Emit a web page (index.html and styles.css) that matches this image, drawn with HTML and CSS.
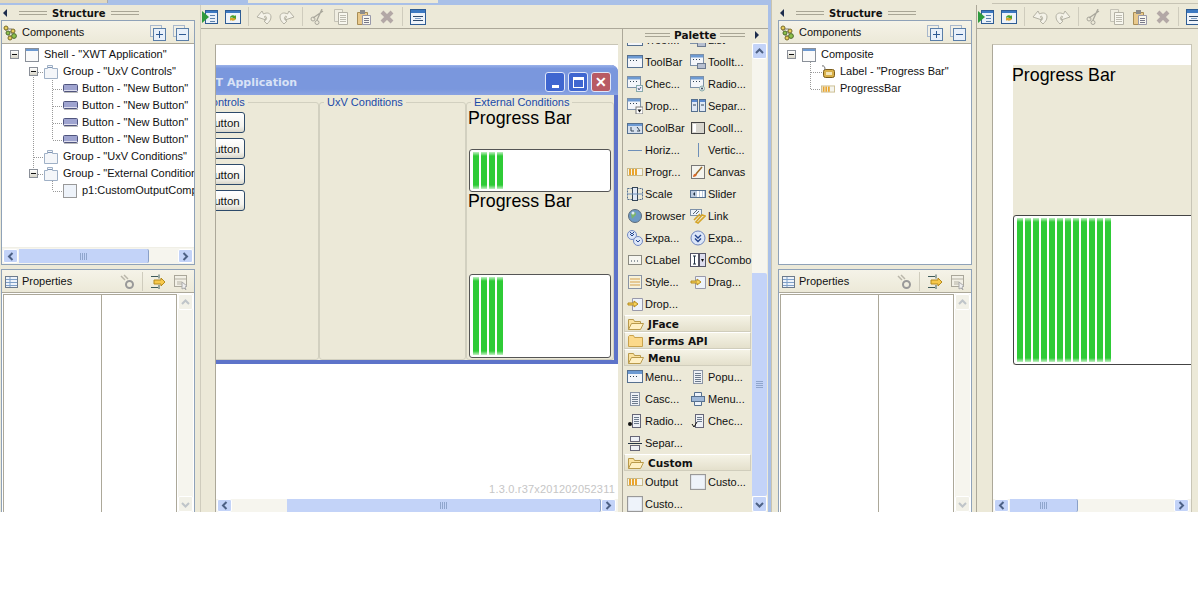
FILE: index.html
```html
<!DOCTYPE html>
<html lang="en">
<head>
<meta charset="utf-8">
<title>WindowBuilder</title>
<link rel="stylesheet" href="styles.css">
</head>
<body>
<svg class="defs" width="0" height="0" aria-hidden="true">
<defs>
<symbol id="comps" viewBox="0 0 16 16"><path d="M3 2v4M3 4h6M7 6l3 4M5 11h3" stroke="#777" fill="none"/><circle cx="3" cy="3" r="2" fill="#e8cf5a" stroke="#776a2a"/><circle cx="5" cy="8" r="2" fill="#8cc04a" stroke="#4c6a2a"/><circle cx="10" cy="6" r="2" fill="#e8cf5a" stroke="#776a2a"/><circle cx="11" cy="11" r="2.4" fill="#8cc04a" stroke="#4c6a2a"/><circle cx="7" cy="13" r="2" fill="#e8cf5a" stroke="#776a2a"/></symbol>
<symbol id="plus" viewBox="0 0 16 16"><rect x=".5" y=".5" width="11" height="11" fill="#f2f0e6" stroke="#a8b8cc"/><rect x="3.5" y="3.5" width="12" height="12" fill="#e8f0fa" stroke="#5a7ea8"/><path d="M6 9.500h7M9.500 6v7" stroke="#2e5a94"/></symbol>
<symbol id="minus" viewBox="0 0 16 16"><rect x=".5" y=".5" width="11" height="11" fill="#f2f0e6" stroke="#a8b8cc"/><rect x="3.500" y="3.500" width="12" height="12" fill="#e8f0fa" stroke="#5a7ea8"/><path d="M6 9.500h7" stroke="#2e5a94"/></symbol>
<symbol id="shell" viewBox="0 0 14 14"><rect x=".5" y=".5" width="13" height="13" fill="#fafafa" stroke="#8a9099"/><rect x="1" y="1" width="12" height="2" fill="#6d9ad2"/></symbol>
<symbol id="group" viewBox="0 0 14 14"><path d="M.5 3.500h3v-3h5v3h5v10H.500z" fill="#f4f6f9" stroke="#9fb0c6"/><path d="M4 2.500h4" stroke="#7c93b3"/></symbol>
<symbol id="btn" viewBox="0 0 15 9"><rect x=".5" y=".5" width="14" height="7" rx="1" fill="#9fa4d0" stroke="#50557e"/><path d="M1 6.500h13" stroke="#e0e0ef"/><path d="M1 8.500h14" stroke="#bbb"/></symbol>
<symbol id="custom" viewBox="0 0 14 14"><rect x=".5" y=".5" width="13" height="13" fill="#eef3fa" stroke="#999"/></symbol>
<symbol id="tag" viewBox="0 0 14 14"><rect x="2.500" y="4.500" width="11" height="8" rx="2" fill="#d8b04a" stroke="#7a5c1a"/><rect x="5" y="7" width="6" height="3" fill="#f4e6b8"/><path d="M1 1c3-1 3 3 3 4" fill="none" stroke="#666"/></symbol>
<symbol id="prog" viewBox="0 0 16 8"><rect x=".5" y=".5" width="15" height="7" fill="#f4f4ee" stroke="#c8b98a"/><path d="M2 1h2v6H2zM5 1h2v6H5zM8 1h2v6H8z" fill="#e9a52e"/></symbol>
<symbol id="table" viewBox="0 0 14 14"><rect x=".5" y="1.500" width="12" height="11" fill="#eef3fa" stroke="#6c7a8c"/><path d="M1 4.500h11M1 7.500h11M1 10.500h11M5 2v10" stroke="#7fa0c8"/></symbol>
<symbol id="restore" viewBox="0 0 16 16"><path d="M2 2l4 4M5 1l4 4" stroke="#b9b6aa" stroke-width="1.500"/><circle cx="10.500" cy="10.500" r="3.500" fill="none" stroke="#999" stroke-width="2"/></symbol>
<symbol id="flow" viewBox="0 0 16 16"><path d="M1 2.500h7M1 13.500h7M9 .5v4M9 11v4" stroke="#3d5a5a"/><path d="M4 6h7V4l4 4-4 4v-2H4z" fill="#f7c94c" stroke="#b58a1c"/></symbol>
<symbol id="cursor" viewBox="0 0 16 16"><rect x="1.500" y="1.500" width="12" height="11" fill="#f2f0e6" stroke="#aaa79a"/><path d="M2 5h11M4 8h5M4 10h5" stroke="#b5b2a5"/><path d="M9 8l5 4-2 1 1 3-2-2-2 1z" fill="#eee" stroke="#aaa"/></symbol>
<symbol id="run" viewBox="0 0 16 16"><rect x="3.500" y="1.500" width="12" height="13" fill="#e9f0f9" stroke="#2e5c94"/><rect x="4" y="2" width="11" height="2" fill="#3c79c2"/><path d="M8 6.500h5M8 9.500h5M8 12.500h5" stroke="#5c82ad"/><path d="M0 2l7 6-7 6z" fill="#2d9a3c"/></symbol>
<symbol id="refresh" viewBox="0 0 16 16"><rect x=".5" y="1.500" width="15" height="13" fill="#eef3fa" stroke="#2e5c94"/><rect x="1" y="2" width="14" height="2" fill="#3c79c2"/><path d="M5 8c1-2 4-2 5-1l1-1v4H7l1-1c-1-.6-2-.4-3 0z" fill="#4ba02c"/><path d="M11 10c-1 2-4 2-5 1l-1 1V9h4z" fill="#d6a32c"/></symbol>
<symbol id="undo" viewBox="0 0 16 16"><path d="M1 8l5-6 1.500 3C11 3 15 4 15 8c0 3-2 5-4 7l-3-3c2-1 3-2 2.500-3.500C10 7 9 7 8.500 7.500L10 11z" fill="#f4f2e8" stroke="#b4b2a4"/></symbol>
<symbol id="redo" viewBox="0 0 16 16"><path d="M15 8l-5-6-1.500 3C5 3 1 4 1 8c0 3 2 5 4 7l3-3c-2-1-3-2-2.500-3.500C6 7 7 7 7.500 7.500L6 11z" fill="#f4f2e8" stroke="#b4b2a4"/></symbol>
<symbol id="cut" viewBox="0 0 16 16"><path d="M12 0L7 11M13 2L3 9" stroke="#a9a79c" stroke-width="1.300"/><circle cx="3" cy="10" r="2" fill="none" stroke="#a9a79c"/><circle cx="7" cy="13.500" r="2" fill="none" stroke="#a9a79c"/></symbol>
<symbol id="copy" viewBox="0 0 16 16"><path d="M1.500.5h8v12h-8z" fill="#f0eee2" stroke="#c4c2b6"/><path d="M5.500 3.500h9v12h-9z" fill="#f8f7ef" stroke="#b4b2a6"/><path d="M7 6.500h6M7 8.500h6M7 10.500h6M7 12.500h6" stroke="#bdbbb0"/></symbol>
<symbol id="paste" viewBox="0 0 16 16"><path d="M1.500 3.500h10v12h-10z" fill="#e9c98c" stroke="#a88d56"/><rect x="4" y="1" width="5" height="4" fill="#8c8c8c"/><path d="M6.500 6.500h8v9h-8z" fill="#f8f7ef" stroke="#99a"/><path d="M8 9.500h5M8 11.500h5M8 13.500h5" stroke="#778"/></symbol>
<symbol id="del" viewBox="0 0 16 16"><path d="M3 3l10 10M13 3L3 13" stroke="#b3a8a6" stroke-width="4"/></symbol>
<symbol id="layout" viewBox="0 0 16 16"><rect x=".5" y=".5" width="15" height="15" fill="#eef3fa" stroke="#2e5c94"/><rect x="1" y="1" width="14" height="3" fill="#3c79c2"/><path d="M3 7.500h10M3 11.500h10" stroke="#2e4a6c"/><path d="M5 9.500h6" stroke="#7fa0c8"/></symbol>
<symbol id="p-tb" viewBox="0 0 16 16"><rect x=".5" y="1.500" width="15" height="12" fill="#f4f6fa" stroke="#56708f"/><rect x="1" y="2" width="14" height="2.500" fill="#6d9ad2"/><path d="M3 6.500h1M6 6.500h1M9 6.500h1" stroke="#345"/></symbol>
<symbol id="p-ti" viewBox="0 0 16 16"><rect x=".5" y=".5" width="13" height="11" fill="#f4f6fa" stroke="#7c90a8"/><rect x="1" y="1" width="12" height="2.500" fill="#6d9ad2"/><path d="M3 5.500h1M6 5.500h1M9 5.500h1" stroke="#345"/><rect x="7.500" y="9.500" width="8" height="5" fill="#b6bfd0" stroke="#6c7a90"/></symbol>
<symbol id="p-ck" viewBox="0 0 16 16"><rect x=".5" y=".5" width="13" height="11" fill="#f4f6fa" stroke="#7c90a8"/><rect x="1" y="1" width="12" height="2.500" fill="#6d9ad2"/><path d="M3 5.500h1M6 5.500h1M9 5.500h1" stroke="#345"/><rect x="9.500" y="9.500" width="6" height="6" fill="#eef" stroke="#8aa"/><path d="M11 12l1 2 2-3" stroke="#567" fill="none"/></symbol>
<symbol id="p-rd" viewBox="0 0 16 16"><rect x=".5" y=".5" width="13" height="11" fill="#f4f6fa" stroke="#7c90a8"/><rect x="1" y="1" width="12" height="2.500" fill="#6d9ad2"/><path d="M3 5.500h1M6 5.500h1M9 5.500h1" stroke="#345"/><circle cx="12" cy="12.500" r="2.500" fill="#e8ecef" stroke="#8aa"/><circle cx="12" cy="12.500" r="1" fill="#345"/></symbol>
<symbol id="p-dr" viewBox="0 0 16 16"><rect x=".5" y=".5" width="13" height="11" fill="#f4f6fa" stroke="#7c90a8"/><rect x="1" y="1" width="12" height="2.500" fill="#6d9ad2"/><path d="M3 5.500h1M6 5.500h1M9 5.500h1" stroke="#345"/><rect x="9" y="9" width="7" height="7" fill="#fff" stroke="#777"/><path d="M10.500 11.500h4l-2 3z" fill="#111"/></symbol>
<symbol id="p-sp" viewBox="0 0 16 16"><rect x="1.500" y="1.500" width="6" height="12" fill="#dfe8f5" stroke="#56708f"/><rect x="9.500" y="1.500" width="6" height="12" fill="#dfe8f5" stroke="#56708f"/><path d="M2 3h5M10 3h5" stroke="#5b8ad0" stroke-width="2"/><path d="M3 7h3M11 7h3" stroke="#345"/></symbol>
<symbol id="p-cb" viewBox="0 0 16 16"><rect x=".5" y="3.500" width="15" height="10" fill="#d6e0ee" stroke="#56708f"/><rect x="1" y="4" width="14" height="2" fill="#6d9ad2"/><path d="M4 7v4h3M10 7l3 4M10 11h3" stroke="#345" fill="none"/></symbol>
<symbol id="p-ci" viewBox="0 0 16 16"><rect x="1.500" y="2.500" width="13" height="11" fill="#d8d6ce" stroke="#444"/><rect x="3" y="4" width="3" height="8" fill="#fff"/></symbol>
<symbol id="p-h" viewBox="0 0 16 16"><path d="M1 8.500h14" stroke="#6e8fb8"/></symbol>
<symbol id="p-v" viewBox="0 0 16 16"><path d="M8.500 1v14" stroke="#6e8fb8"/></symbol>
<symbol id="p-cv" viewBox="0 0 16 16"><rect x="1.500" y="1.500" width="13" height="13" fill="#f4f4ee" stroke="#777"/><path d="M12 3L6 10" stroke="#9a6a2a" stroke-width="1.500"/><path d="M3 13c0-3 2-4 4-3 0 2-2 3-4 3z" fill="#d76a2a"/></symbol>
<symbol id="p-sc" viewBox="0 0 16 16"><rect x=".5" y="2.500" width="15" height="11" fill="none" stroke="#56708f" stroke-dasharray="2 1"/><rect x="5.500" y="1.500" width="5" height="13" fill="#dfe8f5" stroke="#345"/><path d="M0 8h16" stroke="#6e8fb8"/></symbol>
<symbol id="p-sl" viewBox="0 0 16 16"><rect x=".5" y="4.500" width="15" height="7" fill="#bccbe0" stroke="#56708f"/><path d="M5 6l-2 2 2 2z" fill="#234"/><rect x="7" y="5" width="2" height="6" fill="#fff"/><rect x="10" y="5" width="2" height="6" fill="#fff"/><rect x="13" y="5" width="1" height="6" fill="#fff"/></symbol>
<symbol id="p-br" viewBox="0 0 16 16"><circle cx="8" cy="8" r="6.500" fill="#6e9ac4" stroke="#5c6c7c"/><path d="M4 6c2-3 5-2 5 0s-3 3-4 5z" fill="#7cb56a"/><circle cx="6" cy="5" r="1.500" fill="#dfeaf4"/></symbol>
<symbol id="p-lk" viewBox="0 0 16 16"><rect x=".5" y="1.500" width="11" height="6" fill="#eef3fa" stroke="#7c90a8"/><path d="M3 6l4-4M6 6l3-3" stroke="#567"/><path d="M6 14l6-7 3 1-7 7zM4 12l6-6" fill="none" stroke="#d5a52a" stroke-width="1.600"/></symbol>
<symbol id="p-ex" viewBox="0 0 16 16"><circle cx="5" cy="5" r="4.500" fill="#dce6f8" stroke="#7288c0"/><path d="M3 4l2 2 2-2M3 2l2 2 2-2" stroke="#22438c" fill="none"/><circle cx="11" cy="11" r="4.500" fill="#dce6f8" stroke="#7288c0"/><path d="M9 10l2 2 2-2" stroke="#22438c" fill="none"/></symbol>
<symbol id="p-e2" viewBox="0 0 16 16"><circle cx="8" cy="8" r="7" fill="#dce6f8" stroke="#7288c0"/><path d="M5 5l3 3 3-3M5 8.500l3 3 3-3" stroke="#22438c" fill="none" stroke-width="1.400"/></symbol>
<symbol id="p-cl" viewBox="0 0 16 16"><rect x="1.500" y="3.500" width="13" height="9" fill="#f6f6f0" stroke="#8a8a80"/><path d="M4 9h1M7 9h1M10 9h1" stroke="#345"/></symbol>
<symbol id="p-cc" viewBox="0 0 16 16"><rect x=".5" y="1.500" width="8" height="13" fill="#fff" stroke="#556"/><path d="M3 4h3M4.500 4v8M3 12h3" stroke="#234"/><rect x="9.500" y="1.500" width="6" height="13" fill="#dde" stroke="#556"/><path d="M11 7h3l-1.500 3z" fill="#111"/></symbol>
<symbol id="p-st" viewBox="0 0 16 16"><rect x="1.500" y="1.500" width="13" height="13" fill="#f6f2dc" stroke="#8a94a4"/><path d="M3 5h10M3 8h10M3 11h10" stroke="#d5a04a"/></symbol>
<symbol id="p-dg" viewBox="0 0 16 16"><path d="M5.500 2.500h10v12h-10z" fill="#eef3fa" stroke="#99a"/><path d="M1 7h6V5l4 3-4 3V9H1z" fill="#f7d35c" stroke="#b58a1c"/></symbol>
<symbol id="p-me" viewBox="0 0 16 16"><rect x=".5" y="1.500" width="15" height="12" fill="#f4f6fa" stroke="#56708f"/><rect x="1" y="2" width="14" height="3" fill="#6d9ad2"/><path d="M3 7.500h1M6 7.500h1M9 7.500h1" stroke="#345"/></symbol>
<symbol id="p-po" viewBox="0 0 16 16"><rect x="3.500" y="1.500" width="9" height="13" fill="#eef1f6" stroke="#8a94a4"/><path d="M5 4.500h6M5 6.500h6M5 8.500h6M5 10.500h6M5 12.500h6" stroke="#6c7a8c"/></symbol>
<symbol id="p-mb" viewBox="0 0 16 16"><path d="M4.500 1.500h7v4h-7z" fill="#eef3fa" stroke="#56708f"/><rect x="1.500" y="5.500" width="13" height="5" fill="#9fb8d8" stroke="#56708f"/><path d="M4.500 10.500h7v4h-7z" fill="#eef3fa" stroke="#56708f"/></symbol>
<symbol id="p-rm" viewBox="0 0 16 16"><rect x="5.500" y="1.500" width="8" height="13" fill="#eef1f6" stroke="#667"/><path d="M7 4.500h5M7 6.500h5M7 8.500h5M7 10.500h5" stroke="#6c7a8c"/><circle cx="3" cy="11" r="2" fill="#111"/></symbol>
<symbol id="p-cm" viewBox="0 0 16 16"><rect x="5.500" y="1.500" width="8" height="13" fill="#eef1f6" stroke="#667"/><path d="M7 4.500h5M7 6.500h5M7 8.500h5" stroke="#6c7a8c"/><path d="M2 11l2 3 3-5" stroke="#111" fill="none"/></symbol>
<symbol id="p-sm" viewBox="0 0 16 16"><rect x="3.500" y="1.500" width="9" height="5" fill="#eef1f6" stroke="#667"/><path d="M1 8.500h14" stroke="#234"/><rect x="3.500" y="10.500" width="9" height="5" fill="#eef1f6" stroke="#667"/></symbol>
<symbol id="open" viewBox="0 0 16 14"><path d="M.5 12.500v-10h5l1 2h6v2" fill="#fbe2a0" stroke="#b99a4c"/><path d="M.5 12.500l3-6h12l-3 6z" fill="#fff0c4" stroke="#b99a4c"/></symbol>
<symbol id="closed" viewBox="0 0 16 14"><path d="M.5 12.500v-10l1-1h4l1 2h8v9z" fill="#fcd98a" stroke="#c9a24c"/></symbol>
<symbol id="arr-l" viewBox="0 0 9 9"><path d="M6.500 1L3 4.500 6.500 8" fill="none" stroke="#4d6185" stroke-width="2"/></symbol>
<symbol id="arr-r" viewBox="0 0 9 9"><path d="M2.500 1L6 4.500 2.500 8" fill="none" stroke="#4d6185" stroke-width="2"/></symbol>
<symbol id="arr-u" viewBox="0 0 9 9"><path d="M1 6l3.500-3.500L8 6" fill="none" stroke="#4d6185" stroke-width="2"/></symbol>
<symbol id="arr-d" viewBox="0 0 9 9"><path d="M1 3l3.500 3.500L8 3" fill="none" stroke="#4d6185" stroke-width="2"/></symbol>
</defs>
</svg>

<div class="screen">
<section class="win win-left">
  <div class="top top-blue"><span class="top-a"></span><span class="top-b"></span></div>
  <div class="win-body">
    <aside class="side">
      <div class="fold"><i class="tri tri-l"></i><span class="grip"></span><b>Structure</b><span class="grip"></span></div>
      <div class="panel comp">
        <div class="phead"><svg class="i16"><use href="#comps"/></svg><span class="ptitle">Components</span><svg class="i16 mr"><use href="#plus"/></svg><svg class="i16"><use href="#minus"/></svg></div>
        <div class="tree">
          <svg class="lines" width="80" height="150"><path d="M32.500 31v97M51.500 32v62M51.500 133v12M37 26.500h7M33 111.500h11M37 128.500h7M52 43.500h10M52 60.500h10M52 77.500h10M52 94.500h10M52 145.500h10" fill="none" stroke="#999" stroke-dasharray="1 1"/></svg>
          <div class="row l0"><span class="tog"></span><svg class="ic"><use href="#shell"/></svg><span>Shell - "XWT Application"</span></div>
          <div class="row l1"><span class="tog"></span><svg class="ic"><use href="#group"/></svg><span>Group - "UxV Controls"</span></div>
          <div class="row l2"><svg class="ic bt"><use href="#btn"/></svg><span>Button - "New Button"</span></div>
          <div class="row l2"><svg class="ic bt"><use href="#btn"/></svg><span>Button - "New Button"</span></div>
          <div class="row l2"><svg class="ic bt"><use href="#btn"/></svg><span>Button - "New Button"</span></div>
          <div class="row l2"><svg class="ic bt"><use href="#btn"/></svg><span>Button - "New Button"</span></div>
          <div class="row l1"><span class="tog none"></span><svg class="ic"><use href="#group"/></svg><span>Group - "UxV Conditions"</span></div>
          <div class="row l1"><span class="tog"></span><svg class="ic"><use href="#group"/></svg><span>Group - "External Conditions"</span></div>
          <div class="row l2"><svg class="ic"><use href="#custom"/></svg><span>p1:CustomOutputComposite</span></div>
        </div>
        <div class="hbar hbar-tree"><span class="sb"><svg class="a9"><use href="#arr-l"/></svg></span><span class="thumb thumb-tree"><i class="ticks"></i></span><span class="track"></span><span class="sb"><svg class="a9"><use href="#arr-r"/></svg></span></div>
      </div>
      <div class="panel props">
        <div class="phead"><svg class="i14"><use href="#table"/></svg><span class="ptitle">Properties</span><svg class="i16"><use href="#restore"/></svg><span class="tsep"></span><svg class="i16 mr"><use href="#flow"/></svg><svg class="i16"><use href="#cursor"/></svg></div>
        <div class="pbody">
          <div class="ptable"><div class="pcol"></div><div class="pcol2"></div></div>
          <div class="vbar vbar-off"><span class="sb off"><svg class="a9"><use href="#arr-u"/></svg></span><span class="track"></span><span class="sb off"><svg class="a9"><use href="#arr-d"/></svg></span></div>
        </div>
      </div>
    </aside>
    <main class="editor">
      <div class="tools"><svg class="i16"><use href="#run"/></svg><svg class="i16"><use href="#refresh"/></svg><span class="tsep"></span><svg class="i16"><use href="#undo"/></svg><svg class="i16"><use href="#redo"/></svg><span class="tsep"></span><svg class="i16"><use href="#cut"/></svg><svg class="i16"><use href="#copy"/></svg><svg class="i16"><use href="#paste"/></svg><svg class="i16"><use href="#del"/></svg><span class="tsep"></span><svg class="i16"><use href="#layout"/></svg></div>
      <div class="ebody">
        <div class="canvas">
          <div class="stage">
            <div class="xwin">
              <div class="xtitle"><span class="xname">XWT Application</span><span class="wb wb-min"><i></i></span><span class="wb wb-max"><i></i></span><span class="wb wb-close">&#10005;</span></div>
              <div class="xbody">
                <fieldset class="grp"><legend>UxV Controls</legend>
                  <div class="btns"><button class="nb">New Button</button><button class="nb">New Button</button><button class="nb">New Button</button><button class="nb">New Button</button></div>
                </fieldset>
                <fieldset class="grp"><legend>UxV Conditions</legend></fieldset>
                <fieldset class="grp grp3"><legend>External Conditions</legend>
                  <div class="pc pc1"><div class="plabel">Progress Bar</div><div class="pbar pb1"><div class="fill"></div></div></div>
                  <div class="pc pc2"><div class="plabel">Progress Bar</div><div class="pbar pb2"><div class="fill"></div></div></div>
                </fieldset>
              </div>
            </div>
            <span class="version">1.3.0.r37x201202052311</span>
          </div>
          <div class="hbar hbar-main"><span class="sb"><svg class="a9"><use href="#arr-l"/></svg></span><span class="track track-main"></span><span class="thumb thumb-main"><i class="ticks"></i></span><span class="sb"><svg class="a9"><use href="#arr-r"/></svg></span></div>
        </div>
        <div class="palette">
          <div class="fold pfold"><span class="grip"></span><b>Palette</b><span class="grip"></span><i class="tri tri-r"></i></div>
          <div class="pbox">
            <div class="plist">
              <div class="pgrid pgrid-first">
                <div class="pi"><svg class="i16"><use href="#p-tb"/></svg>TreeI...</div><div class="pi"><svg class="i16"><use href="#p-ti"/></svg>List</div>
                <div class="pi"><svg class="i16"><use href="#p-tb"/></svg>ToolBar</div><div class="pi"><svg class="i16"><use href="#p-ti"/></svg>ToolIt...</div>
                <div class="pi"><svg class="i16"><use href="#p-ck"/></svg>Chec...</div><div class="pi"><svg class="i16"><use href="#p-rd"/></svg>Radio...</div>
                <div class="pi"><svg class="i16"><use href="#p-dr"/></svg>Drop...</div><div class="pi"><svg class="i16"><use href="#p-sp"/></svg>Separ...</div>
                <div class="pi"><svg class="i16"><use href="#p-cb"/></svg>CoolBar</div><div class="pi"><svg class="i16"><use href="#p-ci"/></svg>CoolI...</div>
                <div class="pi"><svg class="i16"><use href="#p-h"/></svg>Horiz...</div><div class="pi"><svg class="i16"><use href="#p-v"/></svg>Vertic...</div>
                <div class="pi"><svg class="i16"><use href="#prog"/></svg>Progr...</div><div class="pi"><svg class="i16"><use href="#p-cv"/></svg>Canvas</div>
                <div class="pi"><svg class="i16"><use href="#p-sc"/></svg>Scale</div><div class="pi"><svg class="i16"><use href="#p-sl"/></svg>Slider</div>
                <div class="pi"><svg class="i16"><use href="#p-br"/></svg>Browser</div><div class="pi"><svg class="i16"><use href="#p-lk"/></svg>Link</div>
                <div class="pi"><svg class="i16"><use href="#p-ex"/></svg>Expa...</div><div class="pi"><svg class="i16"><use href="#p-e2"/></svg>Expa...</div>
                <div class="pi"><svg class="i16"><use href="#p-cl"/></svg>CLabel</div><div class="pi"><svg class="i16"><use href="#p-cc"/></svg>CCombo</div>
                <div class="pi"><svg class="i16"><use href="#p-st"/></svg>Style...</div><div class="pi"><svg class="i16"><use href="#p-dg"/></svg>Drag...</div>
                <div class="pi"><svg class="i16"><use href="#p-dg"/></svg>Drop...</div>
              </div>
              <div class="cat"><svg class="i-f"><use href="#open"/></svg>JFace</div>
              <div class="cat"><svg class="i-f"><use href="#closed"/></svg>Forms API</div>
              <div class="cat"><svg class="i-f"><use href="#open"/></svg>Menu</div>
              <div class="pgrid">
                <div class="pi"><svg class="i16"><use href="#p-me"/></svg>Menu...</div><div class="pi"><svg class="i16"><use href="#p-po"/></svg>Popu...</div>
                <div class="pi"><svg class="i16"><use href="#p-po"/></svg>Casc...</div><div class="pi"><svg class="i16"><use href="#p-mb"/></svg>Menu...</div>
                <div class="pi"><svg class="i16"><use href="#p-rm"/></svg>Radio...</div><div class="pi"><svg class="i16"><use href="#p-cm"/></svg>Chec...</div>
                <div class="pi"><svg class="i16"><use href="#p-sm"/></svg>Separ...</div>
              </div>
              <div class="cat"><svg class="i-f"><use href="#open"/></svg>Custom</div>
              <div class="pgrid">
                <div class="pi"><svg class="i16"><use href="#prog"/></svg>Output</div><div class="pi"><svg class="i16"><use href="#custom"/></svg>Custo...</div>
                <div class="pi"><svg class="i16"><use href="#custom"/></svg>Custo...</div>
              </div>
            </div>
            <div class="vbar vbar-pal"><span class="sb"><svg class="a9"><use href="#arr-u"/></svg></span><span class="track"></span><span class="thumb thumb-pal"><i class="ticks ticks-v"></i></span><span class="sb"><svg class="a9"><use href="#arr-d"/></svg></span></div>
          </div>
        </div>
      </div>
    </main>
  </div>
</section>

<section class="win win-right">
  <div class="top top-beige"></div>
  <div class="win-body">
    <aside class="side">
      <div class="fold"><i class="tri tri-l"></i><span class="grip"></span><b>Structure</b><span class="grip"></span></div>
      <div class="panel comp">
        <div class="phead"><svg class="i16"><use href="#comps"/></svg><span class="ptitle">Components</span><svg class="i16 mr"><use href="#plus"/></svg><svg class="i16"><use href="#minus"/></svg></div>
        <div class="tree">
          <svg class="lines" width="80" height="60"><path d="M32.500 16v27M33 26.500h11M33 43.500h11" fill="none" stroke="#999" stroke-dasharray="1 1"/></svg>
          <div class="row l0"><span class="tog"></span><svg class="ic"><use href="#shell"/></svg><span>Composite</span></div>
          <div class="row l1"><span class="tog none"></span><svg class="ic"><use href="#tag"/></svg><span>Label - "Progress Bar"</span></div>
          <div class="row l1"><span class="tog none"></span><svg class="ic"><use href="#prog"/></svg><span>ProgressBar</span></div>
        </div>
      </div>
      <div class="panel props">
        <div class="phead"><svg class="i14"><use href="#table"/></svg><span class="ptitle">Properties</span><svg class="i16"><use href="#restore"/></svg><span class="tsep"></span><svg class="i16 mr"><use href="#flow"/></svg><svg class="i16"><use href="#cursor"/></svg></div>
        <div class="pbody">
          <div class="ptable"><div class="pcol"></div><div class="pcol2"></div></div>
          <div class="vbar vbar-off"><span class="sb off"><svg class="a9"><use href="#arr-u"/></svg></span><span class="track"></span><span class="sb off"><svg class="a9"><use href="#arr-d"/></svg></span></div>
        </div>
      </div>
    </aside>
    <main class="editor">
      <div class="tools"><svg class="i16"><use href="#run"/></svg><svg class="i16"><use href="#refresh"/></svg><span class="tsep"></span><svg class="i16"><use href="#undo"/></svg><svg class="i16"><use href="#redo"/></svg><span class="tsep"></span><svg class="i16"><use href="#cut"/></svg><svg class="i16"><use href="#copy"/></svg><svg class="i16"><use href="#paste"/></svg><svg class="i16"><use href="#del"/></svg><span class="tsep"></span><svg class="i16"><use href="#layout"/></svg></div>
      <div class="ebody ebody-r">
        <div class="canvas canvas-r">
          <div class="stage stage-r">
            <div class="cdesign">
              <div class="plabel clabel">Progress Bar</div>
              <div class="pbar pb3"><div class="fill fill-big"></div></div>
            </div>
          </div>
          <div class="hbar hbar-main"><span class="sb"><svg class="a9"><use href="#arr-l"/></svg></span><span class="thumb thumb-r"><i class="ticks"></i></span><span class="track"></span><span class="sb"><svg class="a9"><use href="#arr-r"/></svg></span></div>
        </div>
        <div class="rstrip"></div>
      </div>
    </main>
  </div>
</section>
</div>
</body>
</html>
```

FILE: styles.css
```css
* { box-sizing: border-box; }
html, body { margin: 0; background: #fff; }
body { font: 11px/1 "Liberation Sans", Arial, sans-serif; color: #111; }
.defs { position: absolute; }
svg { display: block; flex: none; }
.screen { display: flex; width: 1198px; height: 512px; overflow: hidden; background: #ece9d8; }
.win { display: flex; flex-direction: column; height: 512px; flex: none; }
.win-left { width: 771px; border-right: 3px solid #a9c0e8; }
.win-right { width: 427px; padding-left: 5px; border-left: 1px solid #c9c4b0; }
.top { height: 5px; flex: none; display: flex; }
.top-blue { background: #a9c0e8; margin-right: -3px; }
.top-a { width: 108px; height: 3px; background: #e0d8c0; border-right: 1px solid #aaa; }
.top-b { width: 190px; height: 3px; margin-left: 140px; background: #ece9d8; }
.top-beige { border-bottom: 1px solid #c6c3b4; height: 4px; margin-bottom: 1px; margin-left: 215px; }
.win-body { flex: 1; display: flex; min-height: 0; }

.side { width: 195px; padding-left: 1px; flex: none; display: flex; flex-direction: column; }
.fold { height: 15px; display: flex; align-items: center; flex: none; padding: 1px 0 0 2px; }
.fold b { font: bold 10px "DejaVu Sans", sans-serif; margin: 0 5px; }
.tri { width: 0; height: 0; border: 4px solid transparent; display: block; flex: none; }
.tri-l { border-right: 4px solid #1c2c4c; border-left: 0; margin-right: 12px; }
.tri-r { border-left: 4px solid #1c2c4c; border-right: 0; margin-left: 10px; }
.grip { width: 28px; height: 4px; border-top: 1px solid #a8a595; border-bottom: 1px solid #a8a595; flex: none; }

.panel { display: flex; flex-direction: column; border: 1px solid #8fa2b8; width: 194px; background: #fff; overflow: hidden; }
.comp { height: 245px; flex: none; }
.props { flex: 1; margin-top: 4px; border-bottom: 0; min-height: 0; }
.phead { height: 23px; flex: none; background: linear-gradient(#f5f3e8, #ece9d8); border-bottom: 1px solid #aca899; display: flex; align-items: center; padding: 1px 5px 0 1px; }
.ptitle { flex: 1; margin-left: 3px; font-size: 11px; }
.i16 { width: 16px; height: 16px; }
.i14 { width: 14px; height: 14px; margin: 0 0 0 2px; }
.mr { margin-right: 7px; }

.tree { flex: 1; position: relative; overflow: hidden; padding-top: 2px; }
.lines { position: absolute; left: -1px; top: 2px; }
.row { height: 17px; display: flex; align-items: center; white-space: nowrap; position: relative; }
.l0 { padding-left: 8px; }
.l1 { padding-left: 27px; }
.l2 { padding-left: 61px; }
.tog { width: 9px; height: 9px; border: 1px solid #8a8f98; background: linear-gradient(#fff, #d8d5c8); margin-right: 6px; flex: none; position: relative; }
.tog::after { content: ""; position: absolute; left: 1px; top: 3px; width: 5px; height: 1px; background: #111; }
.tog.none { visibility: hidden; }
.ic { width: 14px; height: 14px; margin-right: 5px; }
.ic.bt { width: 15px; height: 9px; margin-right: 4px; }

.hbar { display: flex; align-items: stretch; flex: none; background: #f6f5ee; }
.hbar-tree { height: 17px; padding: 1px; border-top: 1px solid #f0efe6; }
.hbar-main { height: 13px; padding-left: 1px; background: #f6f5ee; }
.vbar { display: flex; flex-direction: column; width: 15px; flex: none; background: #f6f5ee; }
.sb { width: 15px; background: #c3d3f8; border: 1px solid #fff; border-radius: 2px; display: flex; align-items: center; justify-content: center; flex: none; }
.vbar .sb { height: 16px; }
.sb.off { background: #f2f1e8; }
.sb.off .a9 { opacity: .3; }
.a9 { width: 9px; height: 9px; }
.track { flex: 1; }
.thumb { background: #c3d3f8; border-right: 1px solid #8aa0c8; border-radius: 0 2px 2px 0; display: flex; align-items: center; justify-content: center; flex: none; }
.ticks { width: 7px; height: 7px; background: repeating-linear-gradient(90deg, #8fa5cc 0 1px, transparent 1px 2px); display: block; }
.ticks-v { background: repeating-linear-gradient(0deg, #8fa5cc 0 1px, transparent 1px 2px); }
.thumb-tree { width: 130px; margin-left: 1px; }
.thumb-main { width: 314px; }
.thumb-r { width: 68px; margin-left: 1px; }
.track-main { flex: 1; }
.thumb-pal { height: 223px; width: 15px; border-right: 0; flex: none; }

.pbody { flex: 1; display: flex; min-height: 0; padding: 1px 1px 0 1px; gap: 0; }
.ptable { width: 174px; display: flex; border: 1px solid #aca899; border-bottom: 0; flex: none; }
.pcol { width: 98px; border-right: 1px solid #aca899; }
.pcol2 { flex: 1; }
.vbar-off { margin-left: 1px; }

.editor { flex: 1; margin-left: 5px; border-left: 1px solid #cfccbd; display: flex; flex-direction: column; min-width: 0; }
.win-right .editor { margin-left: 4px; border-left-color: #aca899; }
.tools { height: 24px; flex: none; border-bottom: 1px solid #aca899; display: flex; align-items: center; gap: 7px; padding-left: 1px; overflow: hidden; }
.tools .tsep { margin: 0; }
.tsep { width: 1px; height: 19px; background: #cfccbd; margin: 0 7px; flex: none; }
.phead .tsep { margin: 0 7px 0 7px; }
.ebody { flex: 1; display: flex; min-height: 0; padding-left: 14px; }
.ebody-r { padding-left: 15px; }
.canvas { width: 403px; margin-top: 15px; border-left: 1px solid #aca899; border-top: 1px solid #c8c5b6; display: flex; flex-direction: column; background: #fff; flex: none; }
.canvas-r { width: 199px; }
.stage { flex: 1; position: relative; overflow: hidden; display: flex; justify-content: flex-end; align-items: flex-end; padding: 0 3px 3px 0; min-height: 0; }
.hbar-main .sb:last-child { margin-right: 2px; }
.version { color: #c6c6c6; font-size: 11px; letter-spacing: .2px; line-height: 13px; }

.xwin { position: absolute; left: -48px; top: 20px; width: 450px; height: 299px; background: #ece9d8; border: 4px solid #5d73c9; border-top: 0; border-radius: 7px 7px 0 0; display: flex; flex-direction: column; }
.xtitle { height: 30px; margin: 0 -4px; flex: none; background: linear-gradient(#9ab2ea, #7a97dd 12%, #7a97dd 80%, #8aa3e2); border-radius: 7px 7px 0 0; display: flex; align-items: center; gap: 3px; padding: 4px 7px 0 27px; }
.xname { font: bold 11px "DejaVu Sans", sans-serif; color: #d8e2f6; flex: 1; }
.wb { width: 20px; height: 20px; border: 1px solid #dfe6f8; border-radius: 3px; background: #3f66d0; color: #fff; display: flex; align-items: center; justify-content: center; font-size: 14px; }
.wb-min i { width: 7px; height: 3px; background: #fff; margin-top: 8px; display: block; }
.wb-max i { width: 11px; height: 11px; border: 1px solid #fff; border-top-width: 3px; display: block; }
.wb-close { background: #b85a64; font-weight: bold; }
.xbody { flex: 1; display: flex; min-height: 0; }
.grp { width: 147px; margin: 0; padding: 0; border: 1px solid #d2d0c0; border-top: 1px solid #d2d0c0; border-radius: 3px; min-width: 0; flex: none; display: flex; flex-direction: column; }
.grp legend { color: #1a4aa8; font-size: 11px; padding: 1px 3px 0; margin-left: 4px; line-height: 13px; white-space: nowrap; }
.grp3 { width: 148px; }
.btns { display: flex; flex-direction: column; gap: 5px; padding: 3px 0 0 2px; }
.nb { width: 70px; height: 21px; padding: 0; border: 1px solid #2d4a6a; border-radius: 3px; background: linear-gradient(#fff, #f4f3ee 70%, #d8d6ca); font: 11.5px "Liberation Sans", sans-serif; color: #111; }
.pc { display: flex; flex-direction: column; padding-left: 1px; }
.pc1 { height: 83px; }
.pc2 { height: 166px; }
.plabel { flex: 1; font-size: 17.8px; line-height: 18px; color: #000; }
.pbar { width: 142px; border: 1px solid #555; border-radius: 3px; background: #fff; margin-left: 1px; padding: 2px 3px; flex: none; }
.pb1 { height: 43px; }
.pb2 { height: 84px; }
.fill { height: 100%; width: 30px; background: linear-gradient(rgba(255,255,255,.7), transparent 4px, transparent calc(100% - 4px), rgba(255,255,255,.7)), repeating-linear-gradient(90deg, #2ecb36 0 6px, #fff 6px 8px); }

.palette { width: 146px; flex: none; margin-left: 4px; display: flex; flex-direction: column; min-height: 0; border-left: 1px solid #aca899; }
.fold.pfold { height: 14px; padding: 0 0 2px 22px; }
.pfold .grip { width: 25px; }
.pfold b { margin: 0 4px; font-size: 10.5px; }
.pbox { flex: 1; display: flex; min-height: 0; overflow: hidden; }
.plist { width: 129px; flex: none; min-height: 0; overflow: hidden; }
.pgrid { display: grid; grid-template-columns: 63px 63px; grid-auto-rows: 22px; padding-left: 4px; }
.pgrid-first { margin-top: -14px; }
.pi { display: flex; align-items: center; gap: 2px; white-space: nowrap; font-size: 11px; }
.cat { height: 17px; font: bold 10.5px "DejaVu Sans", sans-serif; display: flex; align-items: center; gap: 4px; padding-left: 3px; border: 1px solid #d0cdbc; border-top-color: #fff; background: linear-gradient(#f5f3e6, #e4e0cc); margin-left: 1px; width: 127px; }
.i-f { width: 16px; height: 14px; }
.vbar-pal { width: 15px; }

.rstrip { flex: 1; border-left: 1px solid #c8c5b6; margin-top: 15px; }
.stage-r { display: block; padding: 20px 0 0 20px; }
.cdesign { background: #ece9d8; height: 300px; }
.clabel { height: 150px; padding-top: 1px; margin-left: -1px; flex: none; }
.pb3 { width: 210px; height: 150px; margin-left: 0; border-color: #444; }
.fill-big { width: 96px; }
```
